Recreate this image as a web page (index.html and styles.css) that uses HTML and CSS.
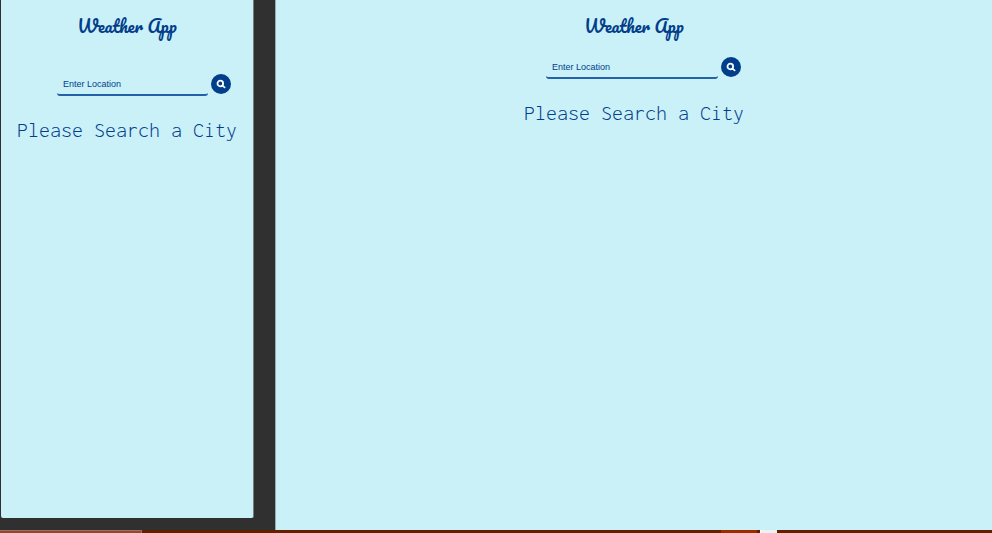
FILE: index.html
```html
<!DOCTYPE html>
<html lang="en">
<head>
<meta charset="utf-8">
<meta name="viewport" content="width=device-width, initial-scale=1">
<title>Weather App</title>
<link rel="stylesheet" href="styles.css">
</head>
<body>
<div class="workspace">
  <section class="pane pane-phone">
    <h1 class="title">Weather App</h1>
    <form class="search">
      <input class="search-input" type="text" placeholder="Enter Location" aria-label="Location">
      <button class="search-button" type="button" aria-label="Search">
        <svg class="search-icon" viewBox="0 0 10 10" aria-hidden="true"><circle cx="4.3" cy="4.5" r="2.8"/><path d="M6.4 6.6 8.6 8.4"/></svg>
      </button>
    </form>
    <p class="message">Please Search a City</p>
  </section>
  <section class="pane pane-desktop">
    <h1 class="title">Weather App</h1>
    <form class="search">
      <input class="search-input" type="text" placeholder="Enter Location" aria-label="Location">
      <button class="search-button" type="button" aria-label="Search">
        <svg class="search-icon" viewBox="0 0 10 10" aria-hidden="true"><circle cx="4.3" cy="4.5" r="2.8"/><path d="M6.4 6.6 8.6 8.4"/></svg>
      </button>
    </form>
    <p class="message">Please Search a City</p>
  </section>
</div>
<div class="taskbar">
  <span class="task task-muted"></span>
  <span class="task task-dark"></span>
  <span class="task task-active"></span>
  <span class="task task-divider"></span>
  <span class="task task-light"></span>
</div>
</body>
</html>
```

FILE: styles.css
```css
* {
  box-sizing: border-box;
}

body {
  margin: 0;
  min-height: 100vh;
  display: flex;
  flex-direction: column;
  background: #303030;
  color: #023e8a;
}

.workspace {
  flex: 1;
  display: flex;
  gap: 21px;
  padding-left: 1px;
}

.pane {
  display: flex;
  flex-direction: column;
  align-items: center;
  padding-top: 12px;
  background: #caf0f8;
}

.pane-phone {
  flex: 0 0 253px;
  margin-bottom: 12px;
  border-right: 1px solid #717e82;
  border-radius: 0 0 2px 2px;
}

.pane-desktop {
  flex: 1;
  border-left: 1px solid #98aaae;
}

.title {
  margin: 0;
  font: 400 17px/28px "Pacifico", "Lato", cursive;
}

.search {
  display: flex;
  align-items: center;
  gap: 3px;
  margin-top: 14px;
  padding-left: 19px;
}

.pane-phone .search {
  margin-top: 31px;
  padding-left: 34px;
}

.search-input {
  width: 172px;
  height: 25px;
  padding: 2px 6px 0;
  border: 0;
  border-bottom: 2px solid #2362a8;
  border-radius: 3px;
  background: transparent;
  color: #023e8a;
  font: 9px "Liberation Sans", Arial, sans-serif;
}

.pane-phone .search-input {
  width: 151px;
}

.search-input::placeholder {
  color: #023e8a;
  opacity: 1;
}

.search-button {
  display: grid;
  place-items: center;
  width: 20px;
  height: 20px;
  padding: 0;
  border: 0;
  border-radius: 50%;
  background: #023e8a;
}

.search-icon {
  width: 10px;
  height: 10px;
  fill: none;
  stroke: #fff;
  stroke-width: 1.8;
  stroke-linecap: round;
}

.message {
  margin: 22px 0 0;
  font: 300 22px/24px "Inconsolata", "Liberation Mono", monospace;
  white-space: nowrap;
}

.taskbar {
  display: flex;
  height: 3px;
  background: #641e00;
}

.task-muted {
  width: 142px;
  background: #8b4b32;
  border-top: 1px solid #a46d58;
  border-right: 1px solid #a46d58;
}

.task-dark {
  width: 579px;
}

.task-active {
  width: 36px;
  background: #9a2c00;
}

.task-divider {
  width: 3px;
}

.task-light {
  width: 17px;
  background: #f0f0f0;
  border-left: 1px solid #fff;
}
```
